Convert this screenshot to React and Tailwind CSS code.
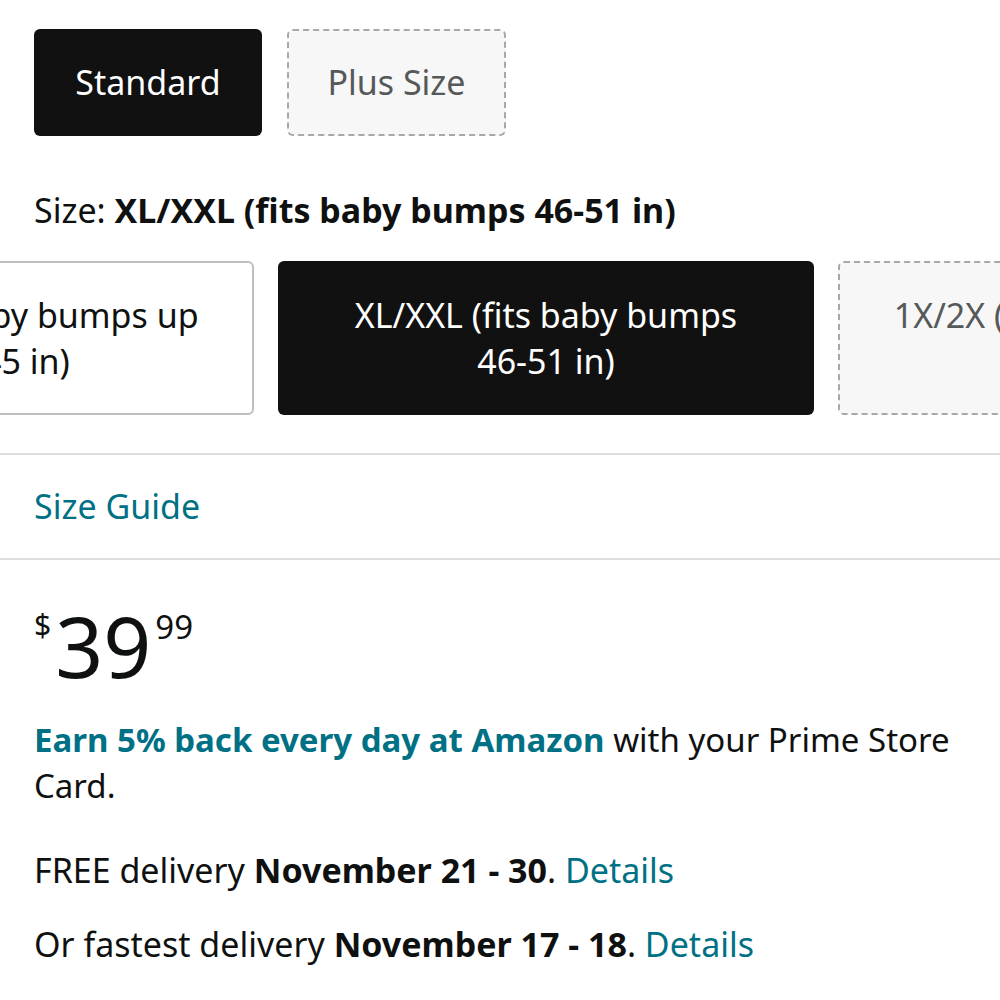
export default function App() {
  const font = { fontFamily: '"Noto Sans", "Open Sans", Arial, sans-serif' };
  return (
    <div className="w-[1000px] h-[1000px] overflow-hidden bg-white text-[#0f1111]" style={font}>
      <div className="px-[34px] pt-[29px]">
        <div className="flex gap-[25px]">
          <div className="w-[228px] h-[107px] flex items-center justify-center rounded-[6px] bg-[#111111] text-white text-[34px]">
            Standard
          </div>
          <div className="w-[219px] h-[107px] flex items-center justify-center rounded-[6px] border-2 border-dashed border-[#a8a8a8] bg-[#f7f7f7] text-[#565959] text-[34px]">
            Plus Size
          </div>
        </div>
        <p className="mt-[54px] text-[34px] leading-[40px] whitespace-nowrap">
          Size: <span className="font-bold">XL/XXL (fits baby bumps 46-51 in)</span>
        </p>
      </div>

      <div className="mt-[31px] overflow-hidden">
        <div className="flex gap-[24px] ml-[-244px] w-max">
          <div className="w-[498px] h-[154px] flex items-center justify-center rounded-[6px] border-2 border-[#bbbfbf] bg-white text-center text-[34px] leading-[46px] whitespace-nowrap">
            <span>
              S/M (fits baby bumps up
              <br />
              to 45 in)
            </span>
          </div>
          <div className="w-[536px] h-[154px] flex items-center justify-center rounded-[6px] bg-[#111111] text-white text-center text-[34px] leading-[46px] px-[50px]">
            XL/XXL (fits baby bumps 46-51 in)
          </div>
          <div className="w-[536px] h-[154px] flex items-center justify-center rounded-[6px] border-2 border-dashed border-[#a8a8a8] bg-[#f7f7f7] text-[#565959] text-center text-[34px] leading-[46px] px-[50px]">
            1X/2X (fits baby bumps 52-57 in)
          </div>
        </div>
      </div>

      <div className="mt-[38px] h-[2px] bg-[#dddddd]" />
      <div className="px-[34px] h-[103px] flex items-center">
        <span className="text-[#007185] text-[34px]">Size Guide</span>
      </div>
      <div className="h-[2px] bg-[#dddddd]" />

      <div className="px-[34px] pt-[48px]">
        <div className="flex items-start leading-none">
          <span className="text-[30px] mt-[2px]">$</span>
          <span className="text-[84px] leading-[76px] ml-[4px]">39</span>
          <span className="text-[33px] mt-[2px] ml-[4px]">99</span>
        </div>

        <p className="mt-[33px] text-[33px] leading-[46px]">
          <span className="font-bold text-[#007185]">Earn 5% back every day at Amazon</span> with your Prime Store Card.
        </p>
        <p className="mt-[38px] text-[34px] leading-[46px] whitespace-nowrap">
          FREE delivery <span className="font-bold">November 21 - 30</span>. <span className="text-[#007185]">Details</span>
        </p>
        <p className="mt-[28px] text-[34px] leading-[46px] whitespace-nowrap">
          Or fastest delivery <span className="font-bold">November 17 - 18</span>. <span className="text-[#007185]">Details</span>
        </p>
      </div>
    </div>
  );
}
